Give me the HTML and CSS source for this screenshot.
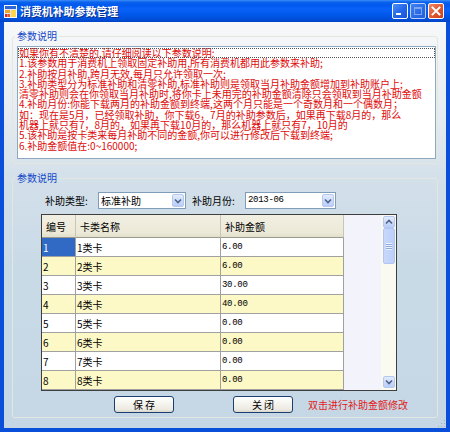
FILE: index.html
```html
<!DOCTYPE html>
<html lang="zh-CN">
<head>
<meta charset="utf-8">
<title>消费机补助参数管理</title>
<link rel="stylesheet" href="styles.css">
</head>
<body>
<div class="window">
  <div class="titlebar">
    <svg class="app-icon" width="13" height="13" viewBox="0 0 13 13">
      <rect x="0.5" y="0.5" width="12" height="12" fill="#dfe8f7" stroke="#ffffff"/>
      <rect x="1" y="1" width="11" height="3" fill="#2f66d6"/>
      <rect x="1" y="5" width="5" height="3" fill="#f4a52a"/>
      <rect x="1" y="9" width="2.5" height="3" fill="#d8301a"/>
      <rect x="4" y="9" width="2" height="3" fill="#ec5a22"/>
      <rect x="7" y="5" width="5" height="7" fill="#ffd54a"/>
    </svg>
    <span class="title">消费机补助参数管理</span>
    <div class="caption-buttons">
      <span class="cap cap-min"><svg width="14" height="14" viewBox="0 0 14 14"><rect x="3" y="9" width="5" height="2" fill="#ffffff"/></svg></span>
      <span class="cap cap-max"><svg width="14" height="14" viewBox="0 0 14 14"><rect x="3.5" y="3.5" width="7" height="7" fill="none" stroke="#7aa6f4"/><rect x="3" y="3" width="8" height="2" fill="#7aa6f4"/></svg></span>
      <span class="cap cap-close"><svg width="14" height="14" viewBox="0 0 14 14"><path d="M3.5 3.5 L10.5 10.5 M10.5 3.5 L3.5 10.5" stroke="#ffffff" stroke-width="1.9" stroke-linecap="square"/></svg></span>
    </div>
  </div>
  <div class="frame">
    <div class="client">
      <fieldset class="group group-notes">
        <legend>参数说明</legend>
        <div class="notes">
          <div class="note-line focused">如果你有不清楚的,请仔细阅读以下参数说明:</div>
          <div class="note-line">1.该参数用于消费机上领取固定补助用,所有消费机都用此参数来补助;</div>
          <div class="note-line">2.补助按月补助,跨月无效,每月只允许领取一次;</div>
          <div class="note-line">3.补助类型分为标准补助和清零补助,标准补助则是领取当月补助金额增加到补助账户上;</div>
          <div class="note-line">清零补助则会在你领取当月补助时,将你卡上未用完的补助金额清除只会领取到当月补助金额</div>
          <div class="note-line">4.补助月份:你能下载两月的补助金额到终端,这两个月只能是一个奇数月和一个偶数月；</div>
          <div class="note-line">如：现在是5月，已经领取补助，你下载6，7月的补助参数后，如果再下载8月的，那么</div>
          <div class="note-line">机器上就只有7，8月的，如果再下载10月的，那么机器上就只有7，10月的</div>
          <div class="note-line">5.该补助是按卡类来每月补助不同的金额,你可以进行修改后下载到终端;</div>
          <div class="note-line">6.补助金额值在:0~160000;</div>
        </div>
      </fieldset>

      <fieldset class="group group-params">
        <legend>参数说明</legend>
        <div class="filters">
          <span class="label label-type">补助类型:</span>
          <div class="combo combo-type">
            <span class="combo-text">标准补助</span>
            <span class="combo-btn"><svg width="10" height="10" viewBox="0 0 10 10"><path d="M2 3.5 L5 6.5 L8 3.5" fill="none" stroke="#4d6185" stroke-width="1.6"/></svg></span>
          </div>
          <span class="label label-month">补助月份:</span>
          <div class="combo combo-month">
            <span class="combo-text mono">2013-06</span>
            <span class="combo-btn"><svg width="10" height="10" viewBox="0 0 10 10"><path d="M2 3.5 L5 6.5 L8 3.5" fill="none" stroke="#4d6185" stroke-width="1.6"/></svg></span>
          </div>
        </div>

        <div class="datagrid">
          <div class="grid-table">
            <div class="hcell">编号</div>
            <div class="hcell">卡类名称</div>
            <div class="hcell">补助金额</div>

            <div class="cell selected">1</div><div class="cell">1类卡</div><div class="cell mono">6.00</div>
            <div class="cell alt">2</div><div class="cell alt">2类卡</div><div class="cell alt mono">6.00</div>
            <div class="cell">3</div><div class="cell">3类卡</div><div class="cell mono">30.00</div>
            <div class="cell alt">4</div><div class="cell alt">4类卡</div><div class="cell alt mono">40.00</div>
            <div class="cell">5</div><div class="cell">5类卡</div><div class="cell mono">0.00</div>
            <div class="cell alt">6</div><div class="cell alt">6类卡</div><div class="cell alt mono">0.00</div>
            <div class="cell">7</div><div class="cell">7类卡</div><div class="cell mono">0.00</div>
            <div class="cell alt">8</div><div class="cell alt">8类卡</div><div class="cell alt mono">0.00</div>
          </div>
          <div class="grid-blank"></div>
          <div class="vscroll">
            <span class="sbtn"><svg width="10" height="10" viewBox="0 0 10 10"><path d="M2 6.5 L5 3.5 L8 6.5" fill="none" stroke="#4d6185" stroke-width="1.6"/></svg></span>
            <span class="sthumb"><span class="grip"></span></span>
            <span class="strack"></span>
            <span class="sbtn"><svg width="10" height="10" viewBox="0 0 10 10"><path d="M2 3.5 L5 6.5 L8 3.5" fill="none" stroke="#4d6185" stroke-width="1.6"/></svg></span>
          </div>
        </div>

        <div class="actions">
          <button class="btn btn-save">保 存</button>
          <button class="btn btn-close">关 闭</button>
          <span class="hint">双击进行补助金额修改</span>
        </div>
      </fieldset>
      <span class="size-grip"></span>
    </div>
  </div>
</div>
</body>
</html>
```
FILE: styles.css
```css
html, body {
  margin: 0;
  padding: 0;
}
body {
  width: 450px;
  height: 432px;
  overflow: hidden;
  font-family: "Noto Sans CJK SC", "Noto Sans", sans-serif;
  font-size: 10px;
  color: #000;
}
.window {
  width: 450px;
  height: 432px;
  display: flex;
  flex-direction: column;
}
.titlebar {
  height: 22px;
  flex: none;
  display: flex;
  align-items: center;
  padding: 0 6px 0 4px;
  background: linear-gradient(to bottom, #3d8ff7 0px, #0b63ec 2px, #0058ee 5px, #0a62f8 9px, #0057ea 15px, #004dd6 20px, #0043c4 22px);
}
.app-icon {
  flex: none;
  display: block;
}
.title {
  margin-left: 3px;
  color: #fff;
  font-weight: bold;
  font-size: 11px;
  line-height: 14px;
  letter-spacing: -0.1px;
  text-shadow: 1px 1px 0 #0a2f8a;
}
.caption-buttons {
  margin-left: auto;
  display: flex;
  gap: 2px;
}
.cap {
  width: 16px;
  height: 16px;
  box-sizing: border-box;
  border: 1px solid #fff;
  border-radius: 2px;
  display: flex;
  align-items: center;
  justify-content: center;
  background: linear-gradient(135deg, #4b8ef9 0%, #2466e8 55%, #1a55d8 100%);
}
.cap svg { display: block; }
.cap-max {
  border-color: #b9cffa;
  background: linear-gradient(135deg, #3f82f2 0%, #2a69e4 60%, #2460dc 100%);
}
.cap-close {
  background: linear-gradient(135deg, #ef8b68 0%, #e05a32 50%, #c8401c 100%);
}
.frame {
  flex: 1;
  display: flex;
  border: solid #0a4fd9;
  border-width: 0 4px 4px;
  box-shadow: inset 1px 0 0 #1c68ee, inset -1px 0 0 #1c68ee, inset 0 -1px 0 #1c68ee;
}
.client {
  flex: 1;
  position: relative;
  display: flex;
  flex-direction: column;
  padding: 8px 8px 10px;
  background: linear-gradient(to bottom, #f7f8f9 0%, #e6ecf1 22%, #d2dfe9 40%, #c9dae7 60%, #c5d7e5 100%);
}
.group {
  margin: 0;
  padding: 0;
  min-width: 0;
  border: 1px solid #e3e7e1;
  border-radius: 3px;
}
.group legend {
  margin-left: 2px;
  padding: 0 2px;
  font-size: 10px;
  line-height: 12px;
  color: #1548c8;
}
.group-notes {
  flex: none;
  padding: 0 1px 4px 4px;
}
.group-notes legend {
  margin-left: -2px;
}
.notes {
  margin-top: 4px;
  height: 113px;
  box-sizing: border-box;
  border: 1px solid #8fa7bf;
  background: #fff;
  padding: 1px 0 0 0;
  overflow: hidden;
}
.note-line {
  font-size: 10px;
  line-height: 10.3px;
  height: 10.3px;
  color: #e00a0a;
  white-space: nowrap;
  padding-left: 1px;
}
.note-line.focused {
  outline: 1px dotted #505050;
  outline-offset: -1px;
}
.group-params {
  flex: 1;
  margin-top: 8px;
  display: flex;
  flex-direction: column;
  padding: 0 0 4px 0;
}
.filters {
  margin-top: 8px;
  height: 17px;
  display: flex;
  align-items: center;
  padding-left: 32px;
}
.label {
  font-size: 10px;
  line-height: 17px;
  white-space: nowrap;
}
.label-type { width: 53px; }
.label-month { width: 53px; margin-left: 6px; }
.combo {
  height: 17px;
  box-sizing: border-box;
  border: 1px solid #7f9db9;
  background: #fff;
  display: flex;
  align-items: center;
}
.combo-type { width: 88px; }
.combo-month { width: 91px; }
.combo-text {
  flex: 1;
  padding-left: 2px;
  font-size: 10px;
  line-height: 15px;
  white-space: nowrap;
}
.combo-btn {
  width: 12px;
  height: 13px;
  margin-right: 1px;
  box-sizing: border-box;
  border: 1px solid #b5c8f0;
  border-radius: 2px;
  background: linear-gradient(to bottom, #e3ecfe 0%, #cddcfc 50%, #b8cdf8 100%);
  display: flex;
  align-items: center;
  justify-content: center;
}
.combo-btn svg, .sbtn svg { display: block; }
.mono {
  font-family: "Liberation Mono", "DejaVu Sans Mono", monospace;
  font-size: 9px;
  letter-spacing: -0.3px;
}
.datagrid {
  margin: 5px 0 0 28px;
  width: 356px;
  height: 177px;
  box-sizing: border-box;
  border: 1px solid #3f3f3f;
  display: flex;
  background: #f3f3fb;
}
.grid-table {
  flex: none;
  display: grid;
  grid-template-columns: 34px 145px 123px;
  grid-template-rows: 23px repeat(8, 19px);
}
.hcell, .cell {
  box-sizing: border-box;
  border-right: 1px solid #a0a0a0;
  border-bottom: 1px solid #a0a0a0;
  display: flex;
  align-items: center;
  white-space: nowrap;
}
.hcell {
  background: linear-gradient(to bottom, #f1efe2 0%, #ece9d8 80%, #e2dfcc 100%);
  border-right-color: #c9c6b4;
  border-bottom-color: #9c9a8c;
  padding-left: 4px;
  font-size: 10px;
}
.cell {
  background: #fff;
  padding-left: 1px;
  font-size: 10px;
}
.cell.mono { font-size: 9px; }
.cell.alt { background: #fdf9c6; }
.cell.selected {
  background: #316ac5;
  color: #fff;
}
.grid-blank {
  flex: 1;
}
.vscroll {
  flex: none;
  width: 15px;
  box-sizing: border-box;
  padding: 1px 1px 2px 2px;
  background: #fbfaf1;
  display: flex;
  flex-direction: column;
}
.sbtn {
  height: 12px;
  box-sizing: border-box;
  border: 1px solid #b5c8f0;
  border-radius: 2px;
  background: linear-gradient(to bottom, #e3ecfe 0%, #cddcfc 50%, #b8cdf8 100%);
  display: flex;
  align-items: center;
  justify-content: center;
}
.sthumb {
  height: 36px;
  box-sizing: border-box;
  border: 1px solid #b2c6f3;
  border-radius: 2px;
  background: linear-gradient(to right, #c8d8fc 0%, #bccffa 100%);
  display: flex;
  align-items: center;
  justify-content: center;
}
.grip {
  width: 6px;
  height: 7px;
  background: repeating-linear-gradient(to bottom, #eef3ff 0 1px, #8ea8e0 1px 2px);
}
.strack { flex: 1; }
.actions {
  margin-top: 5px;
  height: 17px;
  display: flex;
  align-items: center;
  padding-left: 101px;
}
.btn {
  width: 60px;
  height: 17px;
  box-sizing: border-box;
  margin: 0;
  padding: 0;
  border: 1px solid #1b3f72;
  border-radius: 3px;
  background: linear-gradient(to bottom, #ffffff 0%, #f6f5f0 40%, #ebe9e0 85%, #d8d4c8 100%);
  font-family: "Noto Sans CJK SC", sans-serif;
  font-size: 10px;
  line-height: 15px;
  color: #000;
}
.btn-close { margin-left: 59px; }
.hint {
  margin-left: 15px;
  color: #e21a1a;
  font-size: 10px;
  line-height: 17px;
  white-space: nowrap;
}
.size-grip {
  position: absolute;
  right: 1px;
  bottom: 1px;
  width: 8px;
  height: 8px;
  background: radial-gradient(circle, #9fb0bf 0.8px, transparent 1px) 0 0 / 3px 3px;
  clip-path: polygon(100% 0, 100% 100%, 0 100%);
}
```
